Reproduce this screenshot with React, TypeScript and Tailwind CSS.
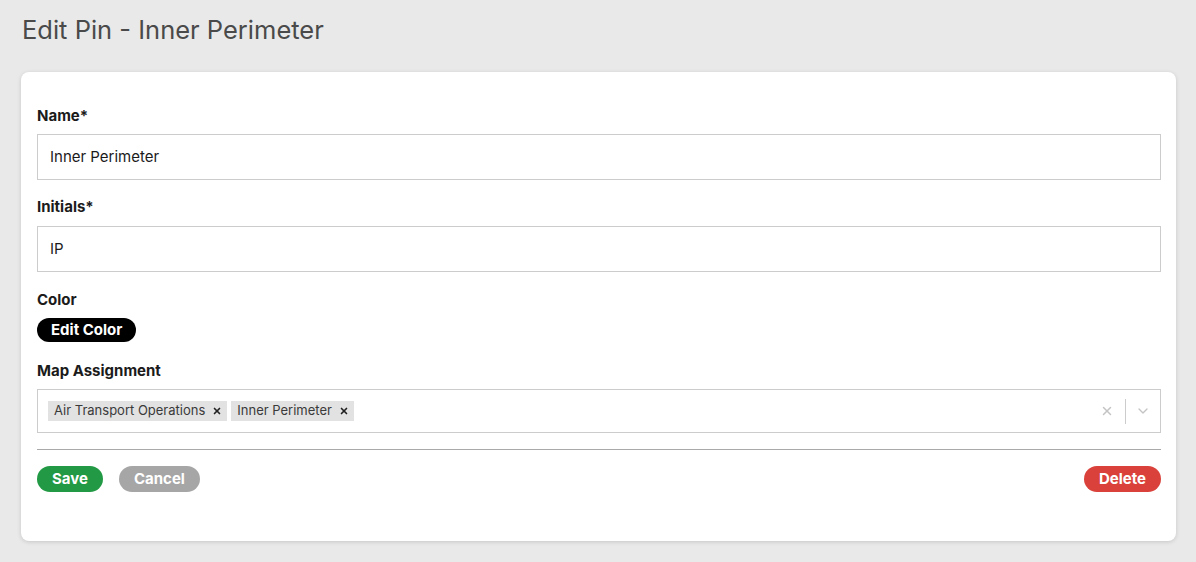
import React from 'react';
import { X, ChevronDown } from 'lucide-react';

const font = { fontFamily: 'Inter, Lato, sans-serif' };

function Label({ children }: { children: React.ReactNode }) {
  return <div className="h-5 text-[15px] leading-5 font-bold text-[#1b1b1b]">{children}</div>;
}

function Tag({ text }: { text: string }) {
  return (
    <div className="flex items-center h-5 bg-[#e2e2e2] pl-[6px] pr-[5px] text-[13px] text-[#3a3a3a]">
      <span>{text}</span>
      <X size={10} strokeWidth={4} className="ml-[7px] text-[#222]" />
    </div>
  );
}

export default function App() {
  return (
    <div className="min-h-[562px] bg-[#e9e9e9] pl-[21px] pr-5 pt-[14px] pb-5" style={font}>
      {/* Header */}
      <h1 className="h-8 text-[25.5px] leading-8 text-[#4a4a4a] pl-[1px]">Edit Pin - Inner Perimeter</h1>

      {/* Card */}
      <div className="mt-[26px] bg-white rounded-lg shadow-[0_1px_4px_rgba(0,0,0,0.15)] pl-4 pr-[15px] pt-[34px] pb-[49px]">
        <Label>Name*</Label>
        <div className="mt-2 h-[46px] border border-[#cccccc] flex items-center px-3 text-[15px] text-[#1b1b1b]">
          Inner Perimeter
        </div>

        <div className="mt-[17px]">
          <Label>Initials*</Label>
        </div>
        <div className="mt-[9px] h-[46px] border border-[#cccccc] flex items-center px-3 text-[15px] text-[#1b1b1b]">
          IP
        </div>

        <div className="mt-[18px]">
          <Label>Color</Label>
        </div>
        <button className="mt-2 h-6 px-[14px] rounded-full bg-black text-white text-[15px] font-bold leading-6">
          Edit Color
        </button>

        <div className="mt-[19px]">
          <Label>Map Assignment</Label>
        </div>
        <div className="mt-2 h-11 border border-[#cccccc] flex items-center pl-[10px]">
          <div className="flex-1 flex items-center gap-1">
            <Tag text="Air Transport Operations" />
            <Tag text="Inner Perimeter" />
          </div>
          <div className="flex items-center h-full">
            <X size={14} strokeWidth={2.5} className="text-[#c4c4c4] mr-[11px]" />
            <div className="w-px h-[25px] bg-[#cccccc]" />
            <ChevronDown size={16} strokeWidth={2} className="text-[#c4c4c4] mx-[9px]" />
          </div>
        </div>

        <div className="mt-4 h-px bg-[#a9a9a9]" />

        <div className="mt-4 flex items-center">
          <button className="h-[26px] px-[15px] rounded-full bg-[#229944] text-white text-[15px] font-bold">
            Save
          </button>
          <button className="ml-4 h-[26px] px-[15px] rounded-full bg-[#a6a6a6] text-white text-[15px] font-bold">
            Cancel
          </button>
          <button className="ml-auto h-[26px] px-[15px] rounded-full bg-[#d9413a] text-white text-[15px] font-bold">
            Delete
          </button>
        </div>
      </div>
    </div>
  );
}
